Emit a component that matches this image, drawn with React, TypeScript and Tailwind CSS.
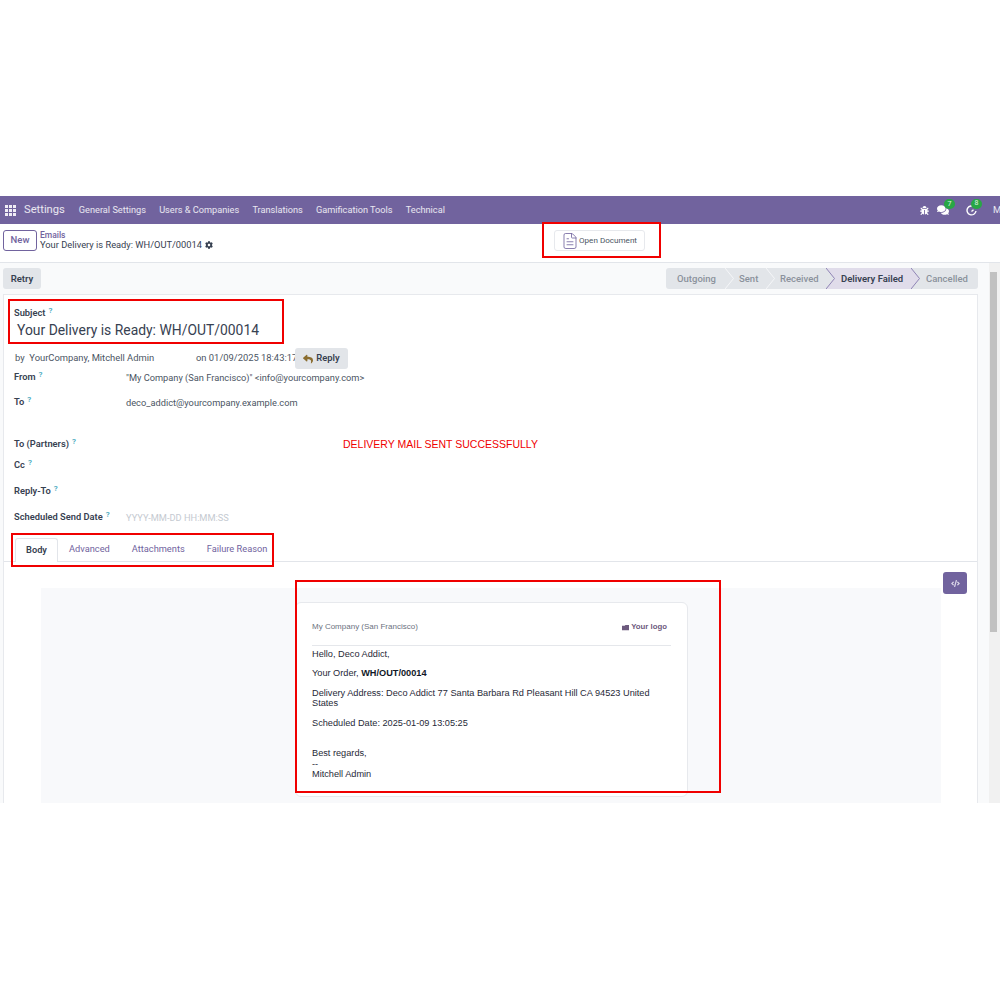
import { FileText } from "lucide-react";
import { FaBug, FaCode, FaCog, FaComments, FaReply } from "react-icons/fa";

function Help() {
  return <span className="ml-[3px] align-[3px] text-[8px] font-semibold leading-none text-[#3fa7bd]">?</span>;
}

function Field({ label, value, h, muted }: { label: string; value?: string; h: string; muted?: boolean }) {
  return (
    <div className={`flex ${h}`}>
      <div className="w-[112px] shrink-0 whitespace-nowrap text-[9.300px] font-semibold leading-[14px] text-[#374151]">
        {label}
        <Help />
      </div>
      {value && (
        <div className={`pt-[1px] text-[9.250px] leading-[14px] ${muted ? "text-[#c5cad1]" : "text-[#4b5563]"}`}>{value}</div>
      )}
    </div>
  );
}

function Stage({ label, width, active, beforeActive }: { label: string; width: string; active?: boolean; beforeActive?: boolean }) {
  const tone = active ? "z-10 bg-[#e0dcea] pl-[15px] font-semibold text-[#374151]" : "font-medium text-[#8b929c]";
  return (
    <div className={`relative flex h-full shrink-0 items-center whitespace-nowrap pt-[1px] text-[9.500px] ${width} ${tone} ${beforeActive ? "z-20" : ""}`}>
      {label}
      <svg className="absolute left-full top-0 h-[21px] w-[9px]" viewBox="0 0 9 21">
        <path
          d="M0 0 L8.500 10.500 L0 21"
          fill={active ? "#e0dcea" : "#e2e5e9"}
          stroke={active || beforeActive ? "#8f84b5" : "#f5f6f8"}
        />
      </svg>
    </div>
  );
}

export default function App() {
  return (
    <div className="relative h-[1000px] w-[1000px] overflow-hidden bg-white pt-[196px] font-['Roboto',sans-serif]">
      <div className="flex h-[607px] flex-col overflow-hidden">
        {/* navbar */}
        <div className="flex h-[28px] shrink-0 items-center bg-[#71639e] text-white/85">
          <svg className="ml-[5px] h-[11px] w-[11px]" viewBox="0 0 11 11" fill="#f0edf6">
            <rect x="0" y="0" width="3" height="3" />
            <rect x="4" y="0" width="3" height="3" />
            <rect x="8" y="0" width="3" height="3" />
            <rect x="0" y="4" width="3" height="3" />
            <rect x="4" y="4" width="3" height="3" />
            <rect x="8" y="4" width="3" height="3" />
            <rect x="0" y="8" width="3" height="3" />
            <rect x="4" y="8" width="3" height="3" />
            <rect x="8" y="8" width="3" height="3" />
          </svg>
          <span className="ml-[8px] text-[11.200px]">Settings</span>
          <div className="ml-[14px] flex gap-[13.200px] text-[9.200px]">
            <span>General Settings</span>
            <span>Users &amp; Companies</span>
            <span>Translations</span>
            <span>Gamification Tools</span>
            <span>Technical</span>
          </div>
          <div className="ml-auto flex items-center">
            <FaBug size={9} className="text-white" />
            <div className="relative ml-[8px]">
              <FaComments size={12} className="text-white" />
              <span className="absolute left-[7px] top-[-5px] flex h-[10px] w-[11px] items-center justify-center rounded-full bg-[#28a745] text-[7px] leading-none">7</span>
            </div>
            <div className="relative ml-[17px]">
              <svg className="h-[11px] w-[11px]" viewBox="0 0 11 11" fill="none" stroke="white" strokeWidth="1.400">
                <path d="M8.500 2 A4.500 4.500 0 1 0 10 6" />
                <path d="M5.500 6.500 L7.500 4.800" />
              </svg>
              <span className="absolute left-[5px] top-[-6px] flex h-[10px] w-[11px] items-center justify-center rounded-full bg-[#28a745] text-[7px] leading-none">8</span>
            </div>
            <span className="ml-[16px] w-[7px] overflow-hidden text-[9.500px]">M</span>
          </div>
        </div>

        {/* control panel */}
        <div className="flex h-[39px] shrink-0 items-start border-b border-[#e2e5ea] bg-white pl-[3px] pt-[6px]">
          <div className="flex w-[551px] shrink-0">
            <button className="flex h-[21px] w-[34px] items-center justify-center rounded-[3px] border border-[#71639e] text-[9.500px] font-medium text-[#71639e]">
              New
            </button>
            <div className="ml-[3px] flex flex-col text-[9.300px] leading-[10px]">
              <span className="text-[8.500px] font-medium text-[#71639e]">Emails</span>
              <span className="flex items-center text-[#374151]">
                Your Delivery is Ready: WH/OUT/00014
                <FaCog size={8} className="ml-[3px] text-[#374151]" />
              </span>
            </div>
          </div>
          <div className="flex h-[21px] w-[91px] items-center rounded-[3px] border border-[#e7e9ed] pl-[6px] text-[8.100px] text-[#4b5563]">
            <FileText size={18} strokeWidth={1.100} className="shrink-0 text-[#71639e]" />
            <span className="whitespace-nowrap">Open Document</span>
          </div>
        </div>

        {/* content */}
        <div className="flex min-h-0 flex-1 bg-[#f9fafb]">
          <div className="flex w-[989px] shrink-0 flex-col pl-[3px] pr-[11px] pt-[5px]">
            <div className="flex h-[21px] shrink-0 items-stretch justify-between">
              <button className="w-[38px] rounded-[3px] bg-[#e2e5e9] pt-[1px] text-[9.500px] font-semibold text-[#374151]">Retry</button>
              <div className="flex w-[312px] overflow-hidden rounded-[3px] bg-[#e2e5e9] pl-[11px]">
                <Stage label="Outgoing" width="w-[48px]" />
                <Stage label="Sent" width="w-[41px] pl-[14px]" />
                <Stage label="Received" width="w-[60px] pl-[14px]" beforeActive />
                <Stage label="Delivery Failed" width="w-[85px]" active />
                <div className="flex items-center whitespace-nowrap pl-[15px] pt-[1px] text-[9.500px] font-medium text-[#8b929c]">Cancelled</div>
              </div>
            </div>

            <div className="mt-[5px] flex min-h-0 flex-1 flex-col overflow-hidden border border-b-0 border-[#e7e9ed] bg-white">
              <div className="shrink-0 px-[10px] pt-[11px]">
                <div className="text-[9.300px] font-semibold leading-[14px] text-[#374151]">
                  Subject
                  <Help />
                </div>
                <div className="ml-[3px] text-[13.900px] leading-[20px] text-[#374151]">Your Delivery is Ready: WH/OUT/00014</div>
                <div className="mt-[8px] flex h-[21px] items-center text-[9.400px] text-[#4b5563]">
                  <span className="w-[182px] whitespace-nowrap pl-[1px]">by&nbsp; YourCompany, Mitchell Admin</span>
                  <span className="w-[99px] whitespace-nowrap">on 01/09/2025 18:43:17</span>
                  <button className="flex h-[21px] w-[53px] items-center justify-center rounded-[3px] bg-[#e2e5e9] font-semibold text-[#374151]">
                    <FaReply size={10} className="mr-[3px] text-[#8a6d2f]" />
                    Reply
                  </button>
                </div>
                <div className="mt-[1px]">
                  <Field label="From" value={'"My Company (San Francisco)" <info@yourcompany.com>'} h="h-[25px]" />
                  <Field label="To" value="deco_addict@yourcompany.example.com" h="h-[42px]" />
                  <Field label="To (Partners)" h="h-[21px]" />
                  <Field label="Cc" h="h-[26px]" />
                  <Field label="Reply-To" h="h-[26px]" />
                  <Field label="Scheduled Send Date" value="YYYY-MM-DD HH:MM:SS" h="h-[16px]" muted />
                </div>
              </div>

              <div className="mt-[12px] flex h-[24px] shrink-0 border-b border-[#e2e5ea] pl-[11px] text-[9.250px]">
                <div className="flex h-[24px] w-[43px] items-center justify-center rounded-t-[3px] border border-b-0 border-[#e2e5ea] bg-white pb-[2px] font-semibold text-[#374151]">Body</div>
                <div className="ml-[11px] flex gap-[22px] pt-[4px] text-[#71639e]">
                  <span>Advanced</span>
                  <span>Attachments</span>
                  <span>Failure Reason</span>
                </div>
              </div>

              <div className="relative flex min-h-0 flex-1 pl-[37px] pt-[26px]">
                <div className="h-full w-[900px] overflow-hidden bg-[#f8f9fb] pl-[254px] pt-[14px] font-['Liberation_Sans',sans-serif]">
                  <div className="h-[195px] w-[393px] rounded-[6px] border border-[#e7e9ed] bg-white px-[16px] text-[9.200px] leading-[10.500px] text-[#1f2937]">
                    <div className="flex h-[43px] items-center justify-between border-b border-[#e5e7eb] pt-[6px]">
                      <span className="text-[8px] text-[#6b7280]">My Company (San Francisco)</span>
                      <span className="mr-[4px] flex items-center text-[7.800px] font-bold text-[#6d5a7e]">
                        <svg className="mr-[2px] h-[7px] w-[7px]" viewBox="0 0 8 8" fill="#6d5a7e">
                          <path d="M0 2 L3 2 L4 1 L8 1 L8 7 L0 7Z" />
                        </svg>
                        Your logo
                      </span>
                    </div>
                    <p className="mt-[2.500px]">Hello, Deco Addict,</p>
                    <p className="mt-[9px]">
                      Your Order, <b className="text-[#111827]">WH/OUT/00014</b>
                    </p>
                    <p className="mt-[9px]">Delivery Address: Deco Addict 77 Santa Barbara Rd Pleasant Hill CA 94523 United States</p>
                    <p className="mt-[9px]">Scheduled Date: 2025-01-09 13:05:25</p>
                    <p className="mt-[20px]">Best regards,</p>
                    <p>--</p>
                    <p>Mitchell Admin</p>
                  </div>
                </div>
                <button className="absolute left-[939px] top-[10px] flex h-[22px] w-[24px] items-center justify-center rounded-[3px] bg-[#71639e] text-[#ddd8ea]">
                  <FaCode size={9} />
                </button>
              </div>
            </div>
          </div>

          {/* scrollbar */}
          <div className="flex-1 bg-[#f1f1f1] pl-[1px] pr-[3px] pt-[9px]">
            <div className="h-[360px] bg-[#c1c1c1]" />
          </div>
        </div>
      </div>

      {/* annotations drawn over the screenshot */}
      <div className="absolute left-[542px] top-[222px] h-[36px] w-[119px] border-2 border-[#f00000]" />
      <div className="absolute left-[8px] top-[299px] h-[45px] w-[276px] border-2 border-[#f00000]" />
      <div className="absolute left-[11px] top-[533px] h-[34px] w-[263px] border-2 border-[#f00000]" />
      <div className="absolute left-[295px] top-[580px] h-[213px] w-[426px] border-2 border-[#f00000]" />
      <div className="absolute left-[343px] top-[437px] font-['Liberation_Sans',sans-serif] text-[10.500px] leading-[14px] text-[#f00000]">
        DELIVERY MAIL SENT SUCCESSFULLY
      </div>
    </div>
  );
}
